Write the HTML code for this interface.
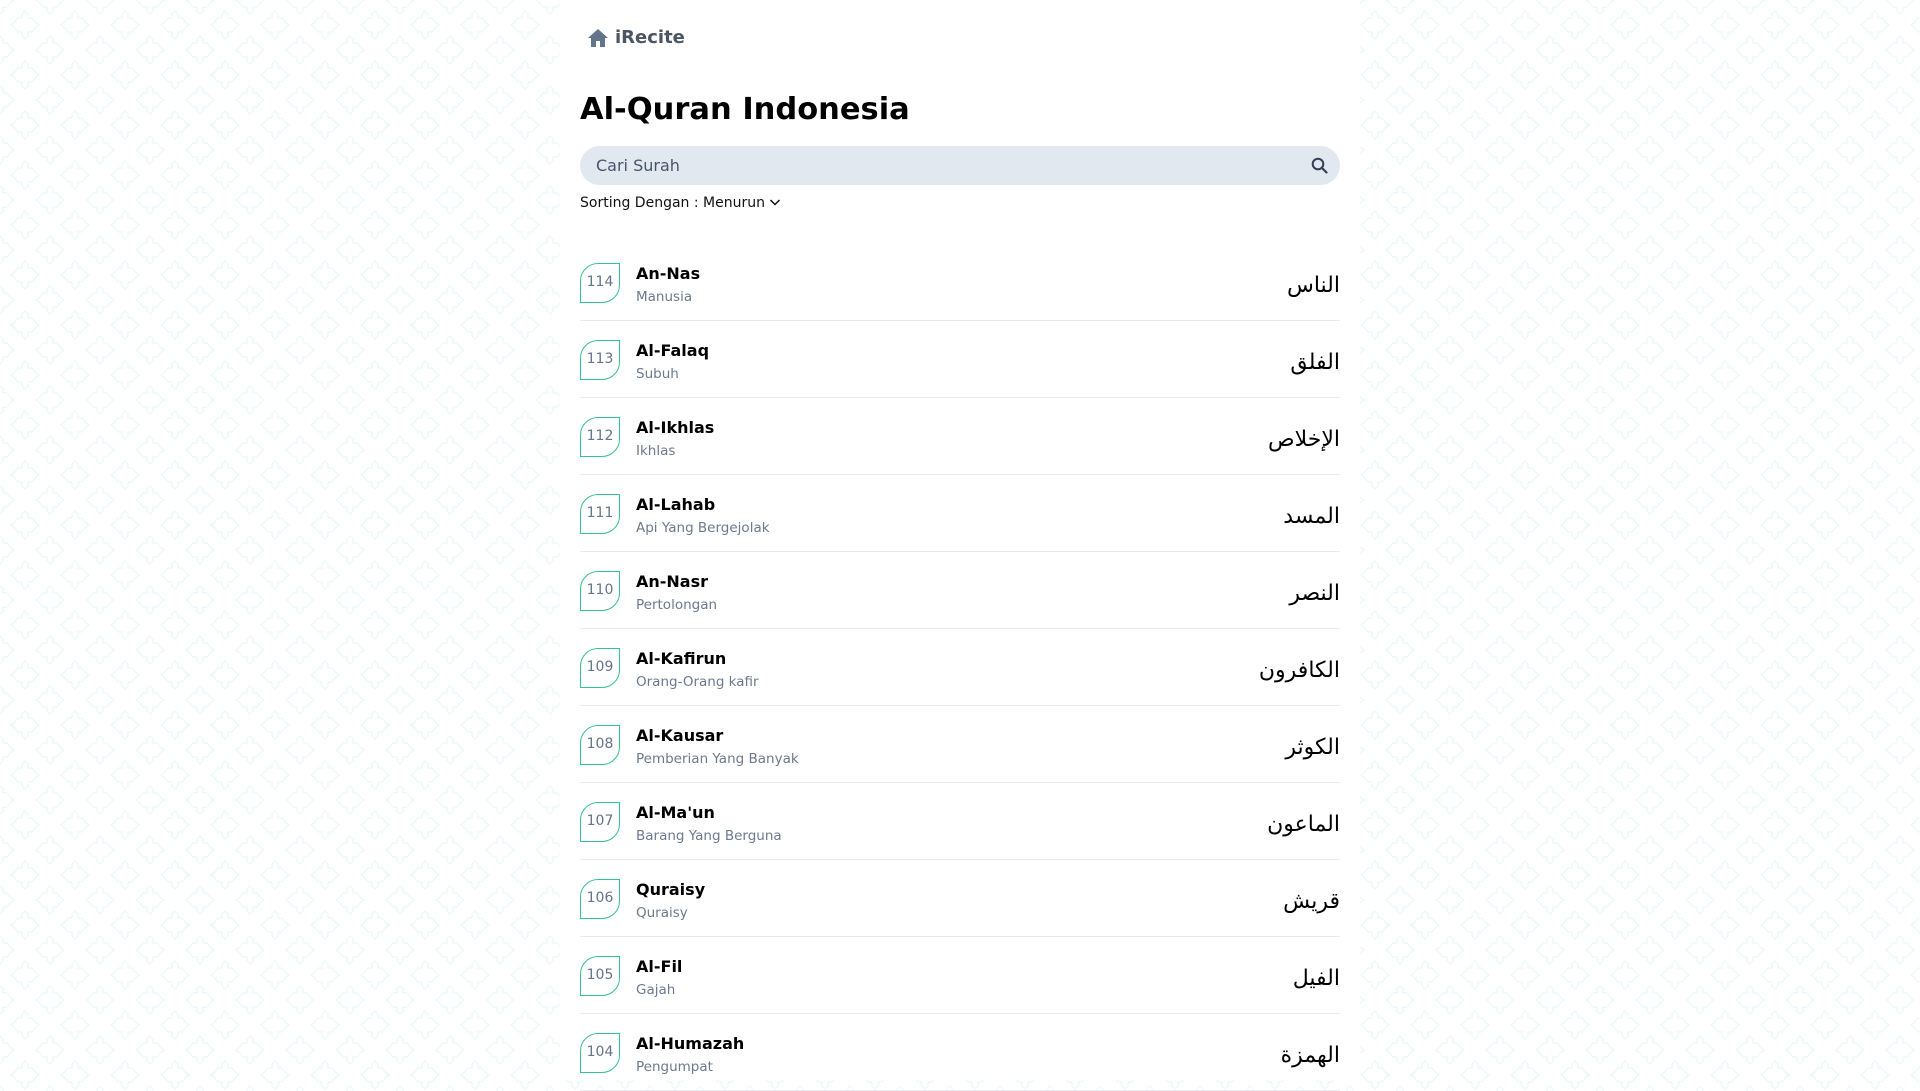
<!DOCTYPE html>
<html><head><meta charset="utf-8">
<style>
*{margin:0;padding:0;box-sizing:border-box}
html,body{width:1920px;height:1080px;overflow:hidden}
body{font-family:"DejaVu Sans","Liberation Sans",sans-serif;background-color:#fff;
background-image:url("data:image/svg+xml,%3Csvg xmlns='http://www.w3.org/2000/svg' width='50' height='50'%3E%3Cg fill='none' stroke='%23eaf8fa' stroke-width='1.2'%3E%3Cpath d='M25 11 L28 14 L28 18 L32 18 L35 22 L39 25 L35 28 L32 32 L28 32 L28 36 L25 39 L22 36 L22 32 L18 32 L15 28 L11 25 L15 22 L18 18 L22 18 L22 14 Z'/%3E%3Cpath d='M0 -14 L3 -11 L3 -7 L7 -7 L10 -3 L14 0 L10 3 L7 7 L3 7 L3 11 L0 14 L-3 11 L-3 7 L-7 7 L-10 3 L-14 0 L-10 -3 L-7 -7 L-3 -7 L-3 -11 Z' transform='translate(0 0)'/%3E%3Cpath d='M0 -14 L3 -11 L3 -7 L7 -7 L10 -3 L14 0 L10 3 L7 7 L3 7 L3 11 L0 14 L-3 11 L-3 7 L-7 7 L-10 3 L-14 0 L-10 -3 L-7 -7 L-3 -7 L-3 -11 Z' transform='translate(50 0)'/%3E%3Cpath d='M0 -14 L3 -11 L3 -7 L7 -7 L10 -3 L14 0 L10 3 L7 7 L3 7 L3 11 L0 14 L-3 11 L-3 7 L-7 7 L-10 3 L-14 0 L-10 -3 L-7 -7 L-3 -7 L-3 -11 Z' transform='translate(0 50)'/%3E%3Cpath d='M0 -14 L3 -11 L3 -7 L7 -7 L10 -3 L14 0 L10 3 L7 7 L3 7 L3 11 L0 14 L-3 11 L-3 7 L-7 7 L-10 3 L-14 0 L-10 -3 L-7 -7 L-3 -7 L-3 -11 Z' transform='translate(50 50)'/%3E%3C/g%3E%3C/svg%3E");}
.col{position:absolute;left:560px;top:0;width:800px;height:1080px;background:#fff}
.in{position:absolute;left:20px;width:760px}
.logo{top:27px;left:28px;display:flex;align-items:center;font-weight:bold;font-size:18px;color:#4b5563}
.logo svg{margin-right:7px}
h1{position:absolute;left:20px;top:88px;font-size:30.5px;font-weight:bold;color:#000;line-height:44px}
.search{top:146px;height:39px;background:#e2e8f0;border-radius:20px;font-size:16px;color:#475569;padding:0 0 0 16px;line-height:39px}
.search svg{position:absolute;right:12px;top:11px}
.sort{top:193px;font-size:14px;color:#111;line-height:20px}
.row{position:absolute;left:20px;width:760px;height:77px;border-bottom:1.5px solid #e9eaee}
.badge{position:absolute;left:0;top:19px;width:40px;height:40px;border:1.5px solid #34c28e;border-radius:18px 0 18px 0;color:#64748b;font-size:14px;text-align:center;line-height:37px}
.nm{position:absolute;left:56px;top:20px;font-weight:bold;font-size:16px;color:#000;line-height:20px}
.sb{position:absolute;left:56px;top:44px;font-size:13.5px;color:#6b7a90;line-height:18px}
.ar{position:absolute;right:0;top:24px;font-family:"DejaVu Sans",serif;font-size:22px;color:#000;line-height:36px;direction:rtl}
</style></head><body>
<div class="col">
<div class="in logo"><svg width="20" height="18" viewBox="0 0 20 18"><path d="M10 0 L20 9 L17 9 L17 18 L12 18 L12 12 L8 12 L8 18 L3 18 L3 9 L0 9 Z" fill="#64748b"/></svg>iRecite</div>
<h1>Al-Quran Indonesia</h1>
<div class="in search">Cari Surah<svg width="17" height="17" viewBox="0 0 17 17"><circle cx="7" cy="7" r="5.3" fill="none" stroke="#334155" stroke-width="2"/><path d="M11 11 L15.5 15.5" stroke="#334155" stroke-width="2.2" stroke-linecap="round"/></svg></div>
<div class="in sort">Sorting Dengan : Menurun <svg width="12" height="10" viewBox="0 0 12 10"><path d="M1.5 3 L6 7.5 L10.5 3" fill="none" stroke="#111" stroke-width="1.5"/></svg></div>

<div class="row" style="top:244px"><div class="badge">114</div><div class="nm">An-Nas</div><div class="sb">Manusia</div><div class="ar">الناس</div></div>
<div class="row" style="top:321px"><div class="badge">113</div><div class="nm">Al-Falaq</div><div class="sb">Subuh</div><div class="ar">الفلق</div></div>
<div class="row" style="top:398px"><div class="badge">112</div><div class="nm">Al-Ikhlas</div><div class="sb">Ikhlas</div><div class="ar">الإخلاص</div></div>
<div class="row" style="top:475px"><div class="badge">111</div><div class="nm">Al-Lahab</div><div class="sb">Api Yang Bergejolak</div><div class="ar">المسد</div></div>
<div class="row" style="top:552px"><div class="badge">110</div><div class="nm">An-Nasr</div><div class="sb">Pertolongan</div><div class="ar">النصر</div></div>
<div class="row" style="top:629px"><div class="badge">109</div><div class="nm">Al-Kafirun</div><div class="sb">Orang-Orang kafir</div><div class="ar">الكافرون</div></div>
<div class="row" style="top:706px"><div class="badge">108</div><div class="nm">Al-Kausar</div><div class="sb">Pemberian Yang Banyak</div><div class="ar">الكوثر</div></div>
<div class="row" style="top:783px"><div class="badge">107</div><div class="nm">Al-Ma'un</div><div class="sb">Barang Yang Berguna</div><div class="ar">الماعون</div></div>
<div class="row" style="top:860px"><div class="badge">106</div><div class="nm">Quraisy</div><div class="sb">Quraisy</div><div class="ar">قريش</div></div>
<div class="row" style="top:937px"><div class="badge">105</div><div class="nm">Al-Fil</div><div class="sb">Gajah</div><div class="ar">الفيل</div></div>
<div class="row" style="top:1014px"><div class="badge">104</div><div class="nm">Al-Humazah</div><div class="sb">Pengumpat</div><div class="ar">الهمزة</div></div>
</div>
</body></html>
